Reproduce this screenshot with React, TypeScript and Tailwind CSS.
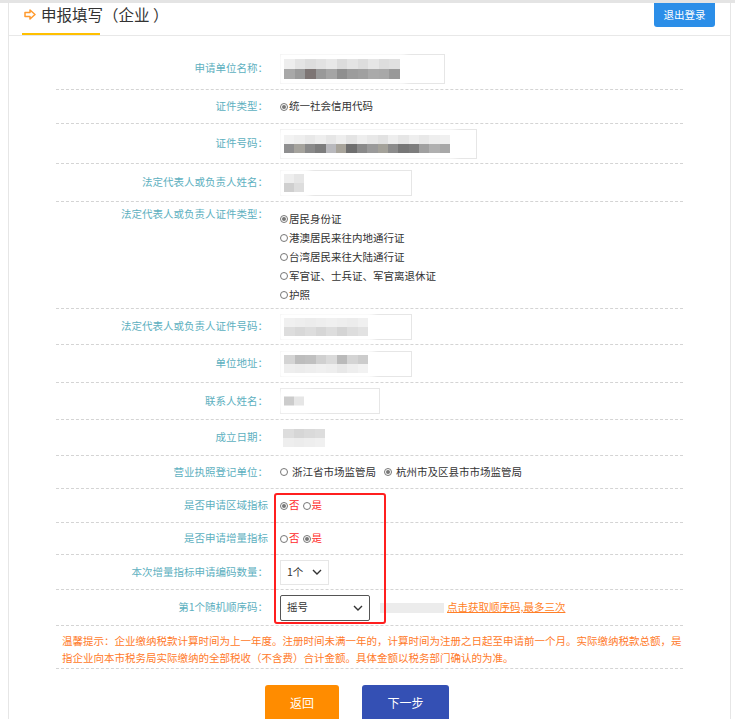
import { FC, ReactNode } from "react";

interface RowProps {
  label: string;
  className: string;
  top?: boolean;
  children?: ReactNode;
}

interface RadioProps {
  checked?: boolean;
  label: string;
  red?: boolean;
  spaced?: boolean;
}

// mosaic blocks standing in for the blurred personal data
const Mosaic: FC<{ rows: string[][]; w: string; h: string }> = ({ rows, w, h }) => (
  <div className="flex flex-col bg-white shadow-[0_0_6px_6px_white] blur-[0.6px]">
    {rows.map((r, i) => (
      <div key={i} className="flex">
        {r.map((c, j) => (
          <span key={j} className={`${w} ${h} ${c}`} />
        ))}
      </div>
    ))}
  </div>
);

const Radio: FC<RadioProps> = ({ checked, label, red, spaced }) => (
  <span className="inline-flex items-center">
    <span
      className={`flex h-[8px] w-[8px] items-center justify-center rounded-full border border-[#777] ${
        spaced ? "mr-[4px]" : "mr-[1px]"
      }`}
    >
      {checked && <span className="h-[4px] w-[4px] rounded-full bg-[#777]" />}
    </span>
    <span className={red ? "text-[#ff2b2b]" : "text-[#333]"}>{label}</span>
  </span>
);

const Row: FC<RowProps> = ({ label, className, top, children }) => (
  <div
    className={`flex border-b border-dashed border-[#d4d4d4] ${
      top ? "items-start pt-[7px]" : "items-center"
    } ${className}`}
  >
    <div className="w-[212px] shrink-0 text-right text-[#5db0c0]">{label}</div>
    <div className="relative flex items-center pl-3">{children}</div>
  </div>
);

const Box: FC<{ className: string; children?: ReactNode }> = ({ className, children }) => (
  <div className={`relative border border-[#e6e6e6] bg-white ${className}`}>
    <div className="absolute left-[3px] top-1/2 -translate-y-1/2">{children}</div>
  </div>
);

const Chevron: FC = () => (
  <svg width="10" height="6" viewBox="0 0 10 6" fill="none">
    <path d="M1 1l4 4 4-4" stroke="#333" strokeWidth="1.4" />
  </svg>
);

const light = "bg-[#ececec]";

const App: FC = () => {
  return (
    <div className="relative h-[719px] w-full overflow-hidden border-t-[3px] border-[#e4e4e4] bg-white font-['Noto_Sans_CJK_SC','Liberation_Sans',sans-serif] text-[10.5px] leading-none">
      <div className="ml-[8px] h-full w-[723px] border-x border-[#e6e6e6]">
        {/* header */}
        <div className="relative flex h-[33px] items-start justify-between border-b border-[#e8e8e8]">
          <div className="ml-[13px] flex h-[32px] w-[78px] items-start border-b-2 border-[#ffc000] pt-[2px]">
            <svg width="12" height="11" viewBox="0 0 12 11" fill="none" className="ml-[2px] mt-[4px] shrink-0">
              <path d="M1 3.5h5V1l5 4.5L6 10V7.5H1z" stroke="#ff9a2e" strokeWidth="1.5" strokeLinejoin="round" />
            </svg>
            <span className="ml-[5px] whitespace-nowrap text-[15.5px] leading-[18px] text-[#333]">申报填写（企业 ）</span>
          </div>
          <button className="mr-[15px] h-[24px] w-[61px] rounded-b-[3px] bg-[#2b8ee8] text-[10.5px] text-white">
            退出登录
          </button>
        </div>

        <div className="ml-[47px] w-[627px]">
          <Row label="申请单位名称：" className="h-[54px] pt-[12px]">
            <Box className="h-[30px] w-[165px]">
              <Mosaic
                w="w-[10.5px]"
                h="h-[10px]"
                rows={[
                  ["bg-[#eee]", "bg-[#e4e4e4]", "bg-[#ddd]", "bg-[#e2e2e2]", "bg-[#e8e8e8]", "bg-[#dcdcdc]", "bg-[#e4e4e4]", "bg-[#ddd]", "bg-[#e6e6e6]", "bg-[#ddd]", "bg-[#e0e0e0]"],
                  ["bg-[#a8a8a8]", "bg-[#9a9a9a]", "bg-[#7d7574]", "bg-[#999]", "bg-[#a5a5a5]", "bg-[#8f8f8f]", "bg-[#9c9c9c]", "bg-[#a0a0a0]", "bg-[#aaa]", "bg-[#a8a8a8]", "bg-[#999]"],
                ]}
              />
            </Box>
          </Row>
          <Row label="证件类型：" className="h-[34px]">
            <Radio checked label="统一社会信用代码" />
          </Row>
          <Row label="证件号码：" className="h-[40px]">
            <Box className="h-[30px] w-[197px]">
              <Mosaic
                w="w-[10.4px]"
                h="h-[9px]"
                rows={[
                  ["bg-[#f2f2f2]", "bg-[#eee]", "bg-[#e8e8e8]", "bg-[#eee]", "bg-[#e6e6e6]", "bg-[#eee]", "bg-[#e4e4e4]", "bg-[#eee]", "bg-[#e8e8e8]", "bg-[#e2e2e2]", "bg-[#eee]", "bg-[#e6e6e6]", "bg-[#eee]", "bg-[#e8e8e8]", "bg-[#eee]", "bg-[#f0f0f0]"],
                  ["bg-[#8f8f90]", "bg-[#a5a39d]", "bg-[#8a8a8a]", "bg-[#7d7d7d]", "bg-[#b9b9bd]", "bg-[#a8a49b]", "bg-[#6f6f6f]", "bg-[#8a8a8a]", "bg-[#9a9a9a]", "bg-[#a4a29a]", "bg-[#8c8c8c]", "bg-[#777]", "bg-[#7d7d7d]", "bg-[#a0a0a0]", "bg-[#b0b0b0]", "bg-[#a8a8a8]"],
                ]}
              />
            </Box>
          </Row>
          <Row label="法定代表人或负责人姓名：" className="h-[38px]">
            <Box className="h-[26px] w-[132px]">
              <Mosaic w="w-[10px]" h="h-[9px]" rows={[["bg-[#eee]", "bg-[#e6e6e6]"], ["bg-[#cfcfcf]", "bg-[#ddd]"]]} />
            </Box>
          </Row>
          <Row label="法定代表人或负责人证件类型：" className="h-[107px]" top>
            <div className="flex flex-col leading-[19px]">
              <Radio checked label="居民身份证" />
              <Radio label="港澳居民来往内地通行证" />
              <Radio label="台湾居民来往大陆通行证" />
              <Radio label="军官证、士兵证、军官离退休证" />
              <Radio label="护照" />
            </div>
          </Row>
          <Row label="法定代表人或负责人证件号码：" className="h-[36px]">
            <Box className="h-[26px] w-[132px]">
              <Mosaic
                w="w-[10.5px]"
                h="h-[9px]"
                rows={[
                  ["bg-[#f0f0f0]", "bg-[#eee]", "bg-[#ececec]", "bg-[#eee]", "bg-[#f0f0f0]", "bg-[#eee]", "bg-[#ececec]", "bg-[#f0f0f0]"],
                  ["bg-[#ddd]", "bg-[#d8d8d8]", "bg-[#ddd]", "bg-[#d6d6d6]", "bg-[#ddd]", "bg-[#d4d4d4]", "bg-[#ddd]", "bg-[#e2e2e2]"],
                ]}
              />
            </Box>
          </Row>
          <Row label="单位地址：" className="h-[38px]">
            <Box className="h-[26px] w-[132px]">
              <Mosaic
                w="w-[10.5px]"
                h="h-[9px]"
                rows={[
                  ["bg-[#d4d4d4]", "bg-[#bdbdbd]", "bg-[#c0c0c0]", "bg-[#d0d0d0]", "bg-[#dadada]", "bg-[#bababa]", "bg-[#d4d4d4]", "bg-[#ccc]"],
                  ["bg-[#eee]", "bg-[#ececec]", "bg-[#eee]", "bg-[#f0f0f0]", "bg-[#eee]", "bg-[#e8e8e8]", "bg-[#eee]", "bg-[#f2f2f2]"],
                ]}
              />
            </Box>
          </Row>
          <Row label="联系人姓名：" className="h-[37px]">
            <Box className="h-[26px] w-[100px]">
              <Mosaic w="w-[10px]" h="h-[9px]" rows={[["bg-[#ccc]", "bg-[#e6e6e6]"]]} />
            </Box>
          </Row>
          <Row label="成立日期：" className="h-[36px]">
            <div className="ml-[3px]">
              <Mosaic
                w="w-[10.5px]"
                h="h-[9px]"
                rows={[
                  ["bg-[#ddd]", "bg-[#d6d6d6]", "bg-[#dadada]", "bg-[#ddd]"],
                  ["bg-[#eee]", "bg-[#ececec]", "bg-[#eee]", "bg-[#f0f0f0]"],
                ]}
              />
            </div>
          </Row>
          <Row label="营业执照登记单位：" className="h-[33px]">
            <span className="flex gap-[8px]">
              <Radio spaced label="浙江省市场监管局" />
              <Radio spaced checked label="杭州市及区县市市场监管局" />
            </span>
          </Row>
          <Row label="是否申请区域指标 " className="h-[34px]">
            <span className="flex gap-[3px]">
              <Radio checked red label="否" />
              <Radio red label="是" />
            </span>
          </Row>
          <Row label="是否申请增量指标 " className="h-[32px]">
            <span className="flex gap-[3px]">
              <Radio red label="否" />
              <Radio checked red label="是" />
            </span>
          </Row>
          <Row label="本次增量指标申请编码数量：" className="h-[35px]">
            <div className="flex h-[25px] w-[49px] items-center justify-between border border-[#e6e6e6] px-[6px] text-[#333]">
              <span>1个</span>
              <Chevron />
            </div>
          </Row>
          <Row label="第1个随机顺序码：" className="h-[36px]">
            <div className="flex h-[26px] w-[90px] items-center justify-between rounded-[2px] border border-[#555] px-[6px] text-[#333]">
              <span>摇号</span>
              <Chevron />
            </div>
            <span className={`ml-[10px] h-[10px] w-[64px] ${light}`} />
            <a className="ml-[3px] whitespace-nowrap text-[#ff7f27] underline">点击获取顺序码,最多三次</a>
          </Row>

          <div className="h-[43px] border-b border-dashed border-[#d4d4d4] pl-[6px] pt-[6px] leading-[17px] text-[#ff7a2a]">
            温馨提示：企业缴纳税款计算时间为上一年度。注册时间未满一年的，计算时间为注册之日起至申请前一个月。实际缴纳税款总额，是
            <br />
            指企业向本市税务局实际缴纳的全部税收（不含费）合计金额。具体金额以税务部门确认的为准。
          </div>

          <div className="mt-[16px] flex gap-[23px] pl-[209px]">
            <button className="h-[36px] w-[74px] rounded-[3px] bg-[#ff8c00] text-[12px] text-white">返回</button>
            <button className="h-[36px] w-[87px] rounded-[3px] bg-[#3450b4] text-[12px] text-white">下一步</button>
          </div>
        </div>
      </div>

      {/* red annotation frame */}
      <div className="absolute left-[274px] top-[490px] h-[131px] w-[112px] rounded-[3px] border-2 border-[#ff1f1f]" />
    </div>
  );
};

export default App;
